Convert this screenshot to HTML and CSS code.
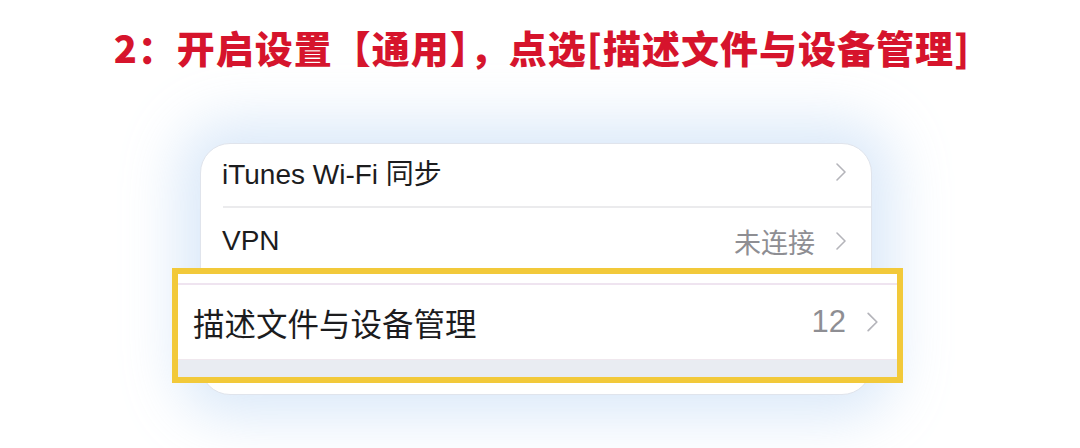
FILE: index.html
```html
<!DOCTYPE html>
<html lang="zh-CN">
<head>
<meta charset="utf-8">
<link rel="stylesheet" href="styles.css">
</head>
<body>
<h1 class="title">2：开启设置【通用】，点选[描述文件与设备管理]</h1>
<div class="stage">
  <div class="card">
    <div class="row row-first">
      <span class="label">iTunes Wi-Fi 同步</span>
      <span class="trail"><svg class="chev" viewBox="0 0 12 20"><path d="M2 2 L10 10 L2 18" /></svg></span>
    </div>
    <div class="divider"></div>
    <div class="row">
      <span class="label">VPN</span>
      <span class="trail"><span class="value">未连接</span><svg class="chev" viewBox="0 0 12 20"><path d="M2 2 L10 10 L2 18" /></svg></span>
    </div>
    <div class="row"></div>
    <div class="highlight">
      <div class="hl-line"></div>
      <div class="hl-row">
        <span class="hl-label">描述文件与设备管理</span>
        <span class="trail"><span class="hl-value">12</span><svg class="chev chev-lg" viewBox="0 0 12 20"><path d="M2 2 L10 10 L2 18" /></svg></span>
      </div>
      <div class="hl-band"></div>
    </div>
  </div>
</div>
</body>
</html>
```
FILE: styles.css
```css
html, body {
  margin: 0;
  padding: 0;
  background: #ffffff;
}
body {
  width: 1080px;
  height: 448px;
  overflow: hidden;
  font-family: "Liberation Sans", "Noto Sans CJK SC", sans-serif;
}
.title {
  margin: 0;
  padding-top: 22px;
  height: 56px;
  text-align: center;
  font-family: "Noto Sans CJK SC", sans-serif;
  font-size: 38px;
  line-height: 50px;
  font-weight: 900;
  color: #d6142c;
  letter-spacing: 1px;
  padding-left: 4px;
}
.stage {
  padding-top: 65px;
  padding-left: 200px;
}
.card {
  position: relative;
  width: 672px;
  height: 252px;
  background: #ffffff;
  border-radius: 30px;
  border: 1px solid #e0e4ec;
  box-sizing: border-box;
  box-shadow: 0 0 55px 22px rgba(210, 228, 248, 0.8);
}
.row {
  height: 66px;
  display: flex;
  align-items: center;
  justify-content: space-between;
  padding: 0 24px 0 21px;
}
.row-first {
  height: 62px;
  box-sizing: border-box;
  padding-bottom: 6px;
}
.label {
  font-size: 28px;
  color: #1c1c1e;
}
.trail {
  display: flex;
  align-items: center;
  gap: 20px;
}
.value {
  font-family: "Noto Sans CJK SC", sans-serif;
  font-size: 27px;
  color: #8e8e93;
}
.chev {
  width: 12px;
  height: 20px;
  fill: none;
  stroke: #b4b4ba;
  stroke-width: 1.6;
  stroke-linecap: round;
  stroke-linejoin: round;
}
.chev-lg {
  width: 13px;
  height: 22px;
}
.divider {
  height: 2px;
  margin-left: 22px;
  background: #ebebed;
}
.highlight {
  position: absolute;
  left: -29px;
  top: 124px;
  width: 731px;
  height: 115px;
  box-sizing: border-box;
  border: 6px solid #f2c93a;
  background: #ffffff;
  display: flex;
  flex-direction: column;
}
.hl-line {
  height: 2px;
  margin-top: 9px;
  background: #efe4f0;
}
.hl-row {
  flex: 1;
  display: flex;
  align-items: center;
  justify-content: space-between;
  padding: 0 18px 0 15px;
}
.hl-label {
  font-family: "Noto Sans CJK SC", sans-serif;
  font-size: 31.5px;
  color: #1c1c1e;
}
.hl-value {
  font-size: 31px;
  color: #8e8e93;
}
.hl-band {
  height: 17px;
  border-top: 1px solid #f0e8ee;
  background: #e9ecf2;
}
```
